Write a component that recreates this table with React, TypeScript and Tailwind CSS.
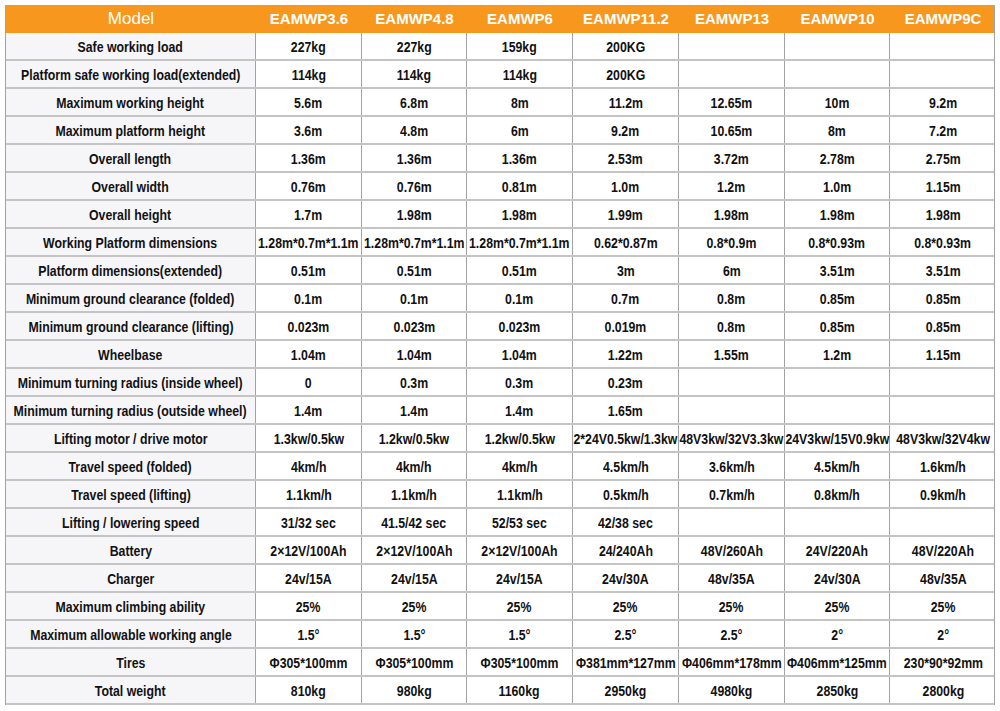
const models = ['EAMWP3.6', 'EAMWP4.8', 'EAMWP6', 'EAMWP11.2', 'EAMWP13', 'EAMWP10', 'EAMWP9C'];

const specs: [string, string[]][] = [
  ['Safe working load', ['227kg', '227kg', '159kg', '200KG', '', '', '']],
  ['Platform safe working load(extended)', ['114kg', '114kg', '114kg', '200KG', '', '', '']],
  ['Maximum working height', ['5.6m', '6.8m', '8m', '11.2m', '12.65m', '10m', '9.2m']],
  ['Maximum platform height', ['3.6m', '4.8m', '6m', '9.2m', '10.65m', '8m', '7.2m']],
  ['Overall length', ['1.36m', '1.36m', '1.36m', '2.53m', '3.72m', '2.78m', '2.75m']],
  ['Overall width', ['0.76m', '0.76m', '0.81m', '1.0m', '1.2m', '1.0m', '1.15m']],
  ['Overall height', ['1.7m', '1.98m', '1.98m', '1.99m', '1.98m', '1.98m', '1.98m']],
  ['Working Platform dimensions', ['1.28m*0.7m*1.1m', '1.28m*0.7m*1.1m', '1.28m*0.7m*1.1m', '0.62*0.87m', '0.8*0.9m', '0.8*0.93m', '0.8*0.93m']],
  ['Platform dimensions(extended)', ['0.51m', '0.51m', '0.51m', '3m', '6m', '3.51m', '3.51m']],
  ['Minimum ground clearance (folded)', ['0.1m', '0.1m', '0.1m', '0.7m', '0.8m', '0.85m', '0.85m']],
  ['Minimum ground clearance (lifting)', ['0.023m', '0.023m', '0.023m', '0.019m', '0.8m', '0.85m', '0.85m']],
  ['Wheelbase', ['1.04m', '1.04m', '1.04m', '1.22m', '1.55m', '1.2m', '1.15m']],
  ['Minimum turning radius (inside wheel)', ['0', '0.3m', '0.3m', '0.23m', '', '', '']],
  ['Minimum turning radius (outside wheel)', ['1.4m', '1.4m', '1.4m', '1.65m', '', '', '']],
  ['Lifting motor / drive motor', ['1.3kw/0.5kw', '1.2kw/0.5kw', '1.2kw/0.5kw', '2*24V0.5kw/1.3kw', '48V3kw/32V3.3kw', '24V3kw/15V0.9kw', '48V3kw/32V4kw']],
  ['Travel speed (folded)', ['4km/h', '4km/h', '4km/h', '4.5km/h', '3.6km/h', '4.5km/h', '1.6km/h']],
  ['Travel speed (lifting)', ['1.1km/h', '1.1km/h', '1.1km/h', '0.5km/h', '0.7km/h', '0.8km/h', '0.9km/h']],
  ['Lifting / lowering speed', ['31/32 sec', '41.5/42 sec', '52/53 sec', '42/38 sec', '', '', '']],
  ['Battery', ['2×12V/100Ah', '2×12V/100Ah', '2×12V/100Ah', '24/240Ah', '48V/260Ah', '24V/220Ah', '48V/220Ah']],
  ['Charger', ['24v/15A', '24v/15A', '24v/15A', '24v/30A', '48v/35A', '24v/30A', '48v/35A']],
  ['Maximum climbing ability', ['25%', '25%', '25%', '25%', '25%', '25%', '25%']],
  ['Maximum allowable working angle', ['1.5°', '1.5°', '1.5°', '2.5°', '2.5°', '2°', '2°']],
  ['Tires', ['Φ305*100mm', 'Φ305*100mm', 'Φ305*100mm', 'Φ381mm*127mm', 'Φ406mm*178mm', 'Φ406mm*125mm', '230*90*92mm']],
  ['Total weight', ['810kg', '980kg', '1160kg', '2950kg', '4980kg', '2850kg', '2800kg']],
];

const grid = 'grid grid-cols-[250px_106px_105px_106px_106px_106px_105px_106px]';

// no Arial Narrow here, so squeeze bold Arial-metric text instead
function Narrow({ children }: { children: string }) {
  return <span className="inline-block scale-x-[0.82] whitespace-nowrap">{children}</span>;
}

export default function App() {
  return (
    <div className="min-h-[711px] w-[1000px] bg-white pl-[5px] pt-[5px] font-['Liberation_Sans','Arial',sans-serif]">
      <div className="w-[990px] border-l border-r border-[#a3a3a3]">
        <div className={`${grid} h-[28px] bg-[#f8971d] text-white`}>
          <div className="flex items-center justify-center text-[17px]">Model</div>
          {models.map((m) => (
            <div key={m} className="flex items-center justify-center text-[15px] font-bold">
              {m}
            </div>
          ))}
        </div>

        {specs.map(([label, values]) => (
          <div
            key={label}
            className={`${grid} h-[28px] border-b-2 border-[#c4c4c4] text-[15px] font-bold text-[#111]`}
          >
            <div className="flex items-center justify-center border-r border-[#a3a3a3] bg-[#f6f6f9] pt-[2px]">
              <Narrow>{label}</Narrow>
            </div>
            {values.map((v, i) => (
              <div
                key={i}
                className="flex items-center justify-center border-r border-[#a3a3a3] pt-[2px] last:border-r-0"
              >
                {v && <Narrow>{v}</Narrow>}
              </div>
            ))}
          </div>
        ))}
      </div>
    </div>
  );
}
